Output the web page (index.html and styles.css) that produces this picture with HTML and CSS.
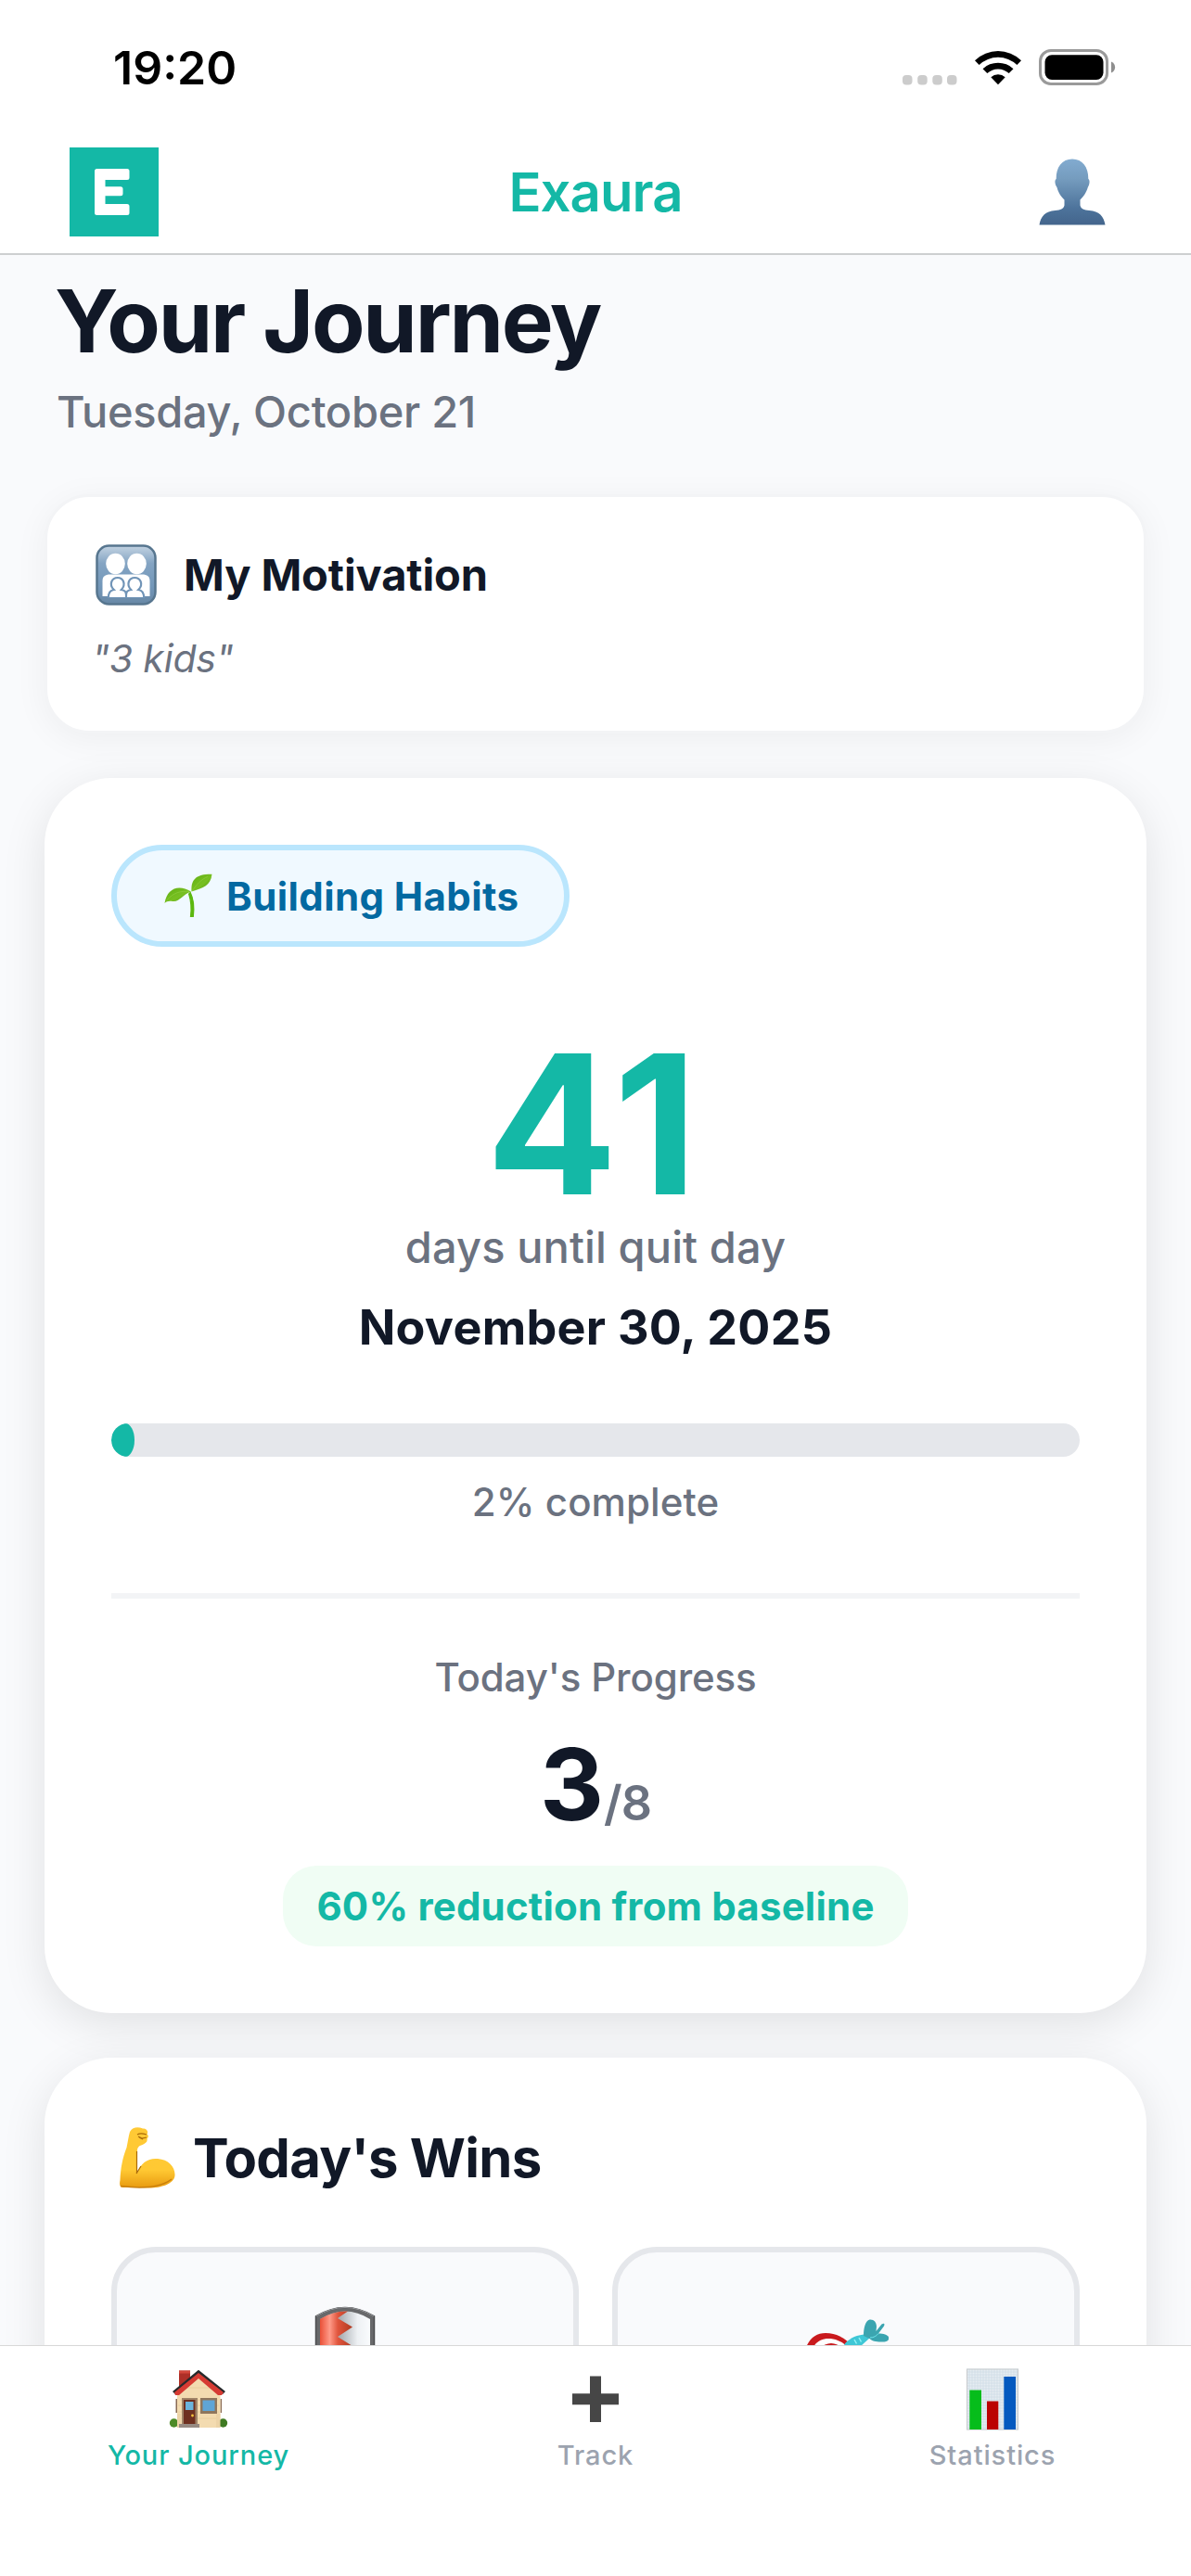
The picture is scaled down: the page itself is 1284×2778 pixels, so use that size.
FILE: index.html
```html
<!DOCTYPE html>
<html lang="en">
<head>
<meta charset="utf-8">
<title>Exaura</title>
<link rel="stylesheet" href="styles.css">
</head>
<body>
<div class="app">
  <header class="top">
    <div class="status">
      <span class="time">19:20</span>
      <svg class="status-icons" viewBox="0 0 230 40" width="230" height="40">
        <g fill="#ccc"><rect x="0" y="28" width="10.5" height="10.5" rx="4"/><rect x="16.2" y="28" width="10.5" height="10.5" rx="4"/><rect x="32.3" y="28" width="10.5" height="10.5" rx="4"/><rect x="48" y="28" width="10.5" height="10.5" rx="4"/></g>
        <path d="M78 12.200a36 36 0 0 1 50 0l-4.600 4.800a29.500 29.500 0 0 0-40.800 0zM86.500 21.200a24 24 0 0 1 33 0l-4.800 4.900a17 17 0 0 0-23.400 0zM95.300 30.200a11.300 11.300 0 0 1 15.400 0l-7.700 8z"/>
        <rect x="148.500" y="1.500" width="72" height="36" rx="11.500" fill="none" stroke="#9a9a9a" stroke-width="3"/>
        <rect x="153.500" y="6.300" width="63" height="26.700" rx="7.500"/>
        <path d="M225 13.500c5.500 2 5.500 10 0 12z" fill="#8e8e8e"/>
      </svg>
    </div>
    <div class="nav">
      <svg class="logo" viewBox="0 0 96 96" width="96" height="96"><rect width="96" height="96" fill="#14b8a6"/><path fill="#fff" d="M29.500 23H62a2.500 2.500 0 0 1 2.500 2.500v7A2.500 2.500 0 0 1 62 35H38.500v7.200H55a2.500 2.500 0 0 1 2.500 2.500v5A2.500 2.500 0 0 1 55 52.200H38.500V61H62a2.500 2.500 0 0 1 2.500 2.500v7A2.500 2.500 0 0 1 62 73H29.500a2.500 2.500 0 0 1-2.500-2.500V25.500A2.500 2.500 0 0 1 29.500 23z"/></svg>
      <span class="brand">Exaura</span>
      <svg class="person" viewBox="0 0 72 72" width="72" height="72">
        <defs><linearGradient id="pg" x1="0" y1="0" x2="0" y2="1"><stop offset="0" stop-color="#82abd0"/><stop offset=".3" stop-color="#759cbe"/><stop offset=".75" stop-color="#4d739b"/><stop offset="1" stop-color="#43658c"/></linearGradient></defs>
        <path fill="url(#pg)" d="M36 .5C47 .5 53.500 9 53.300 22c2 1 1.500 6-.5 9C51 37 48.500 40.500 44.500 44.500v6c1 4 4 5 10 5.500C65 57 70 62 71.500 71.500H.5C2 62 7 57 17.500 56c6-.5 9-1.500 10-5.500v-6C23.500 40.500 21 37 19.500 31c-2.300-3-2.800-8-.8-9C18.500 9 25 .5 36 .5z"/>
      </svg>
    </div>
  </header>

  <main class="content">
    <h1>Your Journey</h1>
    <p class="date">Tuesday, October 21</p>

    <section class="card motivation">
      <div class="motivation-head">
        <svg viewBox="0 0 66 66" width="66" height="66">
          <defs><linearGradient id="fg" x1="0" y1="0" x2="0" y2="1"><stop offset="0" stop-color="#c3d3e2"/><stop offset=".3" stop-color="#84a4c3"/><stop offset=".7" stop-color="#7397b9"/><stop offset="1" stop-color="#6888a6"/></linearGradient></defs>
          <rect x="1.500" y="1.500" width="63" height="63" rx="13" fill="url(#fg)" stroke="#57768f" stroke-width="2.500"/>
          <g fill="#fff"><ellipse cx="21.500" cy="21" rx="10.300" ry="11.300"/><ellipse cx="44.500" cy="21" rx="10.300" ry="11.300"/>
          <path d="M7.500 56V39.500c0-5 3-7 8-7h35c5 0 8 2 8 7V56z"/></g>
          <g fill="#fff" stroke="#7094b7" stroke-width="2.200"><path d="M13.800 58c0-6 2-8.500 6-9-6-6-2-13 4-13s9.500 7 4 13c3.500.5 5.200 2 5.200 5 0-3 1.700-4.500 5.200-5-5.500-6-2-13 4-13s10 7 4 13c4 .5 6 3 6 9z"/><path d="M33 52v6"/></g>
          <path d="M7 58h52v3H7z" fill="#6b8caa"/>
        </svg>
        <h2>My Motivation</h2>
      </div>
      <p class="quote">"3 kids"</p>
    </section>

    <section class="card hero">
      <div class="phase">
        <svg viewBox="0 0 52 48" width="52" height="48">
          <defs><linearGradient id="lg" x1="0" y1="0" x2="1" y2="1"><stop offset="0" stop-color="#5fae12"/><stop offset=".55" stop-color="#78c022"/><stop offset="1" stop-color="#4a9308"/></linearGradient></defs>
          <path d="M28 20c4.500 9 4.500 17 3.300 26.500h-2.800c1.200-9 .5-17-2-25" fill="#5cb80f" stroke="#5cb80f" stroke-width="1.200"/>
          <path d="M29.500 19.500C28.500 6 35 .5 51.500.800 50 13 42.500 15.500 29.500 19.500z" fill="url(#lg)"/>
          <path d="M.5 32C3 16 15.500 11 29 19.500 20 22 17 31 9 30 5 29.500 2.500 30 .5 32z" fill="url(#lg)"/>
          <path d="M30 19C35 12 40 6 47 3.500M3 28.500C10 21 17 18.500 27 19.500" fill="none" stroke="#8ccb3a" stroke-width=".8"/>
        </svg>
        <span>Building Habits</span>
      </div>
      <div class="count">41</div>
      <p class="until">days until quit day</p>
      <p class="quit-date">November 30, 2025</p>
      <div class="bar"><div class="bar-fill" style="width:2.4%"></div></div>
      <p class="complete">2% complete</p>
      <hr>
      <p class="today-label">Today's Progress</p>
      <p class="today"><b>3</b><span>/8</span></p>
      <div class="reduction">60% reduction from baseline</div>
    </section>

    <section class="card wins">
      <div class="wins-head">
        <svg viewBox="0 0 60 66" width="60" height="66">
          <defs><linearGradient id="ag" x1="0" y1="0" x2="0" y2="1"><stop offset="0" stop-color="#ffc935"/><stop offset=".7" stop-color="#ffc933"/><stop offset="1" stop-color="#e89a10"/></linearGradient></defs>
          <path fill="url(#ag)" d="M11 5C14-.5 20-.5 25 1.500c5 0 6 4 4.500 6 2.500 2 1 4 0 5 1 3-2 5-5 6.500-4 1-5.500 3-5.500 7v23c4-11 12-16 22-15 12 1 19 9 18.500 18-.5 9-15 13.500-28 13.500-8 0-17-1-27.500-.5C0 65-.5 62 .5 57 1 45 3 33 7.500 22 9 15 9.500 10 11 5z"/>
          <path d="M18.500 26v24M18 50l5-8M19 8c3-2 7-1 10 0M20 10l4 2 5-1M25 13l-4-2" fill="none" stroke="#a96a08" stroke-width="1.200"/>
          <path d="M1 63.500C17 65.500 42 67 56 56" fill="none" stroke="#c97f0c" stroke-width="1.500"/>
        </svg>
        <h2>Today's Wins</h2>
      </div>
      <div class="win-grid">
        <div class="win">
          <svg viewBox="0 0 66 84" width="66" height="84">
            <defs><linearGradient id="sr" x1="0" y1="0" x2="1" y2="0"><stop offset="0" stop-color="#ea5037"/><stop offset=".3" stop-color="#ff9a88"/><stop offset=".55" stop-color="#e0553d"/><stop offset="1" stop-color="#b03a20"/></linearGradient>
            <linearGradient id="sw" x1="0" y1="0" x2="1" y2="0"><stop offset=".4" stop-color="#a9aeb3"/><stop offset=".75" stop-color="#eef1f4"/><stop offset="1" stop-color="#f9fbfd"/></linearGradient></defs>
            <path d="M1.500 11Q33-8 64.500 11v38Q60 72 33 82 6 72 1.500 49z" fill="#68696b" stroke="#4b4c4e" stroke-width="1.500"/>
            <path d="M6 14Q33-3 60 14v35Q56 68 33 77 10 68 6 49z" fill="url(#sw)"/>
            <path d="M6 14Q20 5 36 5.500L25 13l16 9.500L25 33l16 10-16 9 8 25Q10 68 6 49z" fill="url(#sr)"/>
            <path d="M2 11Q33-8 64 11" fill="none" stroke="#999b9e" stroke-width="1"/>
          </svg>
        </div>
        <div class="win">
          <svg class="dart" viewBox="0 0 92 92" width="92" height="92">
            <path d="M0 50C0 26 10 15 24 15c12 0 20 5 27 12l9 30-20 30H10z" fill="#c91a1e"/>
            <path d="M8 50C6 30 15 21 27 21c9 0 16 4 22 10l4 20-20 26H16z" fill="#fff"/>
            <ellipse cx="30" cy="46" rx="17" ry="20" fill="#c91a1e"/>
            <path d="M30 48L46 25c6-5 10-8 24-9l2 4L62 29 34 50z" fill="#3fc7d6"/>
            <path d="M65 18c0-9 2-16 6.500-17.500C76 0 79 3 79 8l-.5 5 6-7.500c3-2 3.500 0 2.500 2l-6 8c7 0 11 2 11.500 5-.5 3-4 4.500-9 4-5 0-10-1-12-3.500z" fill="#3ba5b0"/>
            <path d="M72 20c4 0 7-2 9-4.500" fill="none" stroke="#6fe3ea" stroke-width="1"/>
            <path d="M55 22l2.500 4.500M60 20l2.500 4.500" stroke="#91f1f5" stroke-width="1.500"/>
          </svg>
        </div>
      </div>
    </section>
  </main>

  <nav class="tabs">
    <div class="tab active">
      <svg viewBox="0 0 66 68" width="66" height="68">
        <g transform="translate(2 1)">
          <path d="M10 1.500h12V22H10z" fill="#ad2f27"/><path d="M10 1.500h12v3H10z" fill="#d1463b"/>
          <path d="M6.500 32h2v15h-2zM54.500 32h1.500v15h-1.500z" fill="#8a6b54"/>
          <path d="M8 27L31 7l23.500 20v36H8z" fill="#f3dbb0"/>
          <path d="M11 33h41M9 39h44M9 46h44M9 53h44M18 20h26" stroke="#e5cb9c" stroke-width=".8"/>
          <path d="M3 24L31 .8 60 24l-3 3L31 5 6 27z" fill="#27292b"/>
          <path d="M5 25L31 4l27 21-2 3h-4L31 10 10 28H6z" fill="#d63b33"/>
          <circle cx="4.500" cy="58" r="4.700" fill="#4c8a27"/><circle cx="57.500" cy="58" r="4.700" fill="#3f7a22"/>
          <path d="M8 48h4v15H8zM50 48h4.500v15H50z" fill="#ecd3a7"/>
          <path d="M13 31h17v29H13z" fill="#a08468"/><path d="M15 33h12.500v27H15z" fill="#6e3020"/><path d="M17 35h8.500v9H17z" fill="#6bb4dd"/><circle cx="24.500" cy="50" r="1.400" fill="#f4c23c"/>
          <path d="M10 59h22v4H10z" fill="#978a82"/>
          <path d="M33 31h18v17H33z" fill="#8f765c"/><path d="M35.500 33.500h13V45h-13z" fill="#5fa5d6"/>
        </g>
      </svg>
      <span>Your Journey</span>
    </div>
    <div class="tab">
      <svg viewBox="0 0 66 68" width="66" height="68"><path fill="#464646" d="M27 8.500h12v18.700h19v12H39V58H27V39.200H8v-12h19z"/></svg>
      <span>Track</span>
    </div>
    <div class="tab">
      <svg viewBox="0 0 66 68" width="66" height="68">
        <rect x="5" y=".5" width="56" height="66" fill="#e6edf2"/>
        <path d="M8 1v65M11 1v65M14 1v65M17 1v65M20 1v65M23 1v65M26 1v65M29 1v65M32 1v65M35 1v65M38 1v65M41 1v65M44 1v65M47 1v65M50 1v65M53 1v65M56 1v65M59 1v65M5 4h56M5 7h56M5 10h56M5 13h56M5 16h56M5 19h56M5 22h56M5 25h56M5 28h56M5 31h56M5 34h56M5 37h56M5 40h56M5 43h56M5 46h56M5 49h56M5 52h56M5 55h56M5 58h56M5 61h56M5 64h56" stroke="#cbdae5" stroke-width=".7"/>
        <rect x="5.500" y="1" width="55" height="65" fill="none" stroke="#c6c9cc"/>
        <path fill="#06bd1b" d="M8.300 23.500H21V66H8.300z"/><path fill="#bb0202" d="M27 35.500h12.300V66H27z"/><path fill="#0459bf" d="M45.300 9H58v57H45.300z"/>
      </svg>
      <span>Statistics</span>
    </div>
  </nav>
</div>
</body>
</html>
```
FILE: styles.css
```css
* { box-sizing: border-box; margin: 0; padding: 0; }
body { background: #f9fafc; font-family: Inter, "Liberation Sans", sans-serif; color: #111827; }
svg { display: block; flex: none; }
.app { width: 1284px; height: 2778px; display: flex; flex-direction: column; overflow: hidden; }

.top { flex: none; height: 275px; background: #fff; border-bottom: 2px solid #cdcfd0; }
.status { height: 159px; padding: 53px 81px 0 122px; display: flex; justify-content: space-between; align-items: flex-start; }
.time { font-size: 50px; line-height: 40px; font-weight: 600; letter-spacing: 0; color: #000; }
.nav { height: 96px; padding: 0 92px 0 75px; display: grid; grid-template-columns: 96px 1fr 72px; align-items: center; }
.brand { text-align: center; padding-right: 7px; font-size: 58px; line-height: 70px; font-weight: 600; letter-spacing: -0.9px; color: #14b8a6; }

.content { flex: 1; min-height: 0; overflow: hidden; padding: 21px 48px 0; }
h1 { font-size: 94px; line-height: 100px; font-weight: 700; letter-spacing: -2.2px; padding-left: 11px; }
.date { margin-top: 18px; padding-left: 13px; font-size: 47px; line-height: 60px; font-weight: 500; letter-spacing: -0.3px; color: #6b7280; }
.card { background: #fff; }
.motivation { height: 258px; margin-top: 59px; padding: 51px 52px; border: 3px solid #f3f4f6; border-radius: 48px; box-shadow: 0 6px 36px rgba(0,0,0,.05); }
.motivation-head { display: flex; align-items: center; gap: 29px; }
.motivation-head h2 { font-size: 47px; line-height: 60px; font-weight: 650; letter-spacing: -0.1px; }
.quote { margin: 30px 0 0 -4px; font-size: 41px; line-height: 54px; font-style: italic; letter-spacing: -0.2px; color: #6b7280; }

.hero { height: 1332px; margin-top: 48px; padding: 72px; border-radius: 72px; box-shadow: 0 12px 48px rgba(0,0,0,.1); display: flex; flex-direction: column; align-items: center; }
.phase { align-self: flex-start; width: 494px; height: 111px; padding: 0 0 0 51px; display: flex; align-items: center; gap: 15px; border: 6px solid #bae6fd; border-radius: 60px; background: #f0f9ff; color: #0369a1; font-size: 42px; font-weight: 650; letter-spacing: .4px; white-space: nowrap; }
.count { margin: 85px 4px 0 0; font-size: 209px; line-height: 212px; font-weight: 700; letter-spacing: 4px; color: #14b8a6; }
.until { margin-top: -3px; font-size: 47px; line-height: 60px; font-weight: 550; letter-spacing: .1px; color: #6b7280; }
.quit-date { margin-top: 24px; font-size: 52px; line-height: 66px; font-weight: 650; letter-spacing: .3px; }
.bar { width: 1044px; height: 36px; margin-top: 70px; border-radius: 18px; background: #e5e7eb; overflow: hidden; }
.bar-fill { height: 36px; border-radius: 15px 10px 10px 15px / 18px; background: #14b8a6; }
.complete { margin-top: 23px; font-size: 42px; line-height: 52px; font-weight: 550; letter-spacing: .1px; color: #6b7280; }
hr { width: 1044px; height: 6px; margin-top: 72px; border: 0; background: #f3f4f6; }
.today-label { margin-top: 59px; font-size: 42px; line-height: 52px; font-weight: 550; letter-spacing: -0.1px; color: #6b7280; }
.today { margin-top: 24px; height: 130px; line-height: 130px; display: flex; align-items: baseline; }
.today b { font-size: 107px; font-weight: 700; }
.today span { font-size: 52px; font-weight: 600; letter-spacing: -1px; color: #6b7280; }
.reduction { margin-top: 23px; width: 674px; height: 87px; line-height: 87px; text-align: center; border-radius: 36px; background: #f0fdf4; color: #14b8a6; font-size: 42px; font-weight: 650; letter-spacing: .2px; white-space: nowrap; }

.wins { height: 700px; margin-top: 48px; padding: 72px; border-radius: 72px; box-shadow: 0 12px 48px rgba(0,0,0,.1); }
.wins-head { display: flex; align-items: center; gap: 19px; height: 72px; padding-left: 9px; }
.wins-head h2 { font-size: 58px; line-height: 72px; font-weight: 700; letter-spacing: -0.7px; }
.win-grid { margin-top: 60px; display: grid; grid-template-columns: 1fr 1fr; gap: 36px; }
.win { height: 300px; padding-top: 58px; display: flex; justify-content: center; align-items: flex-start; border: 6px solid #e5e7eb; border-radius: 48px; background: #f9fafc; }
.dart { margin-top: 14px; }

.tabs { flex: none; height: 249px; display: grid; grid-template-columns: repeat(3, 1fr); padding-top: 24px; background: #fff; border-top: 1px solid #d8d8d8; }
.tab { display: flex; flex-direction: column; align-items: center; gap: 8px; color: #9ca3af; font-size: 29px; line-height: 36px; font-weight: 500; letter-spacing: .9px; }
.tab.active { color: #14b8a6; }
```
